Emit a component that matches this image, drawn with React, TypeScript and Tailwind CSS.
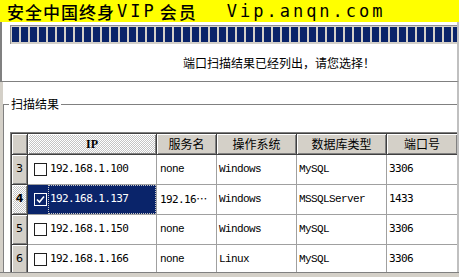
import React from "react";

const rows = [
  { n: "3", ip: "192.168.1.100", svc: "none", os: "Windows", db: "MySQL", port: "3306", sel: false },
  { n: "4", ip: "192.168.1.137", svc: "192.16", os: "Windows", db: "MSSQLServer", port: "1433", sel: true },
  { n: "5", ip: "192.168.1.150", svc: "none", os: "Windows", db: "MySQL", port: "3306", sel: false },
  { n: "6", ip: "192.168.1.166", svc: "none", os: "Linux", db: "MySQL", port: "3306", sel: false },
];

const blocks = Array.from({ length: 50 }, (_, i) => i);

const ipFont = "font-['DejaVu_Sans_Mono',monospace] text-[11px] tracking-[-0.6px]";
const serifMono = "font-['Liberation_Mono',monospace] text-[11px] tracking-[-0.6px]";
const cjk = "font-['Noto_Sans_CJK_SC',sans-serif] text-[12px]";

const headCell =
  "h-[21px] flex items-center justify-center bg-[#d4d0c8] border-r border-b border-[#404040] shadow-[inset_1px_1px_#ffffff,inset_-1px_-1px_#808080] text-black";
const checker =
  "bg-[repeating-conic-gradient(#c4c4c4_0%_25%,#ffffff_0%_50%)] bg-[length:2px_2px]";
const dataCell =
  "h-[30px] flex items-center pl-[2px] bg-white border-r border-b border-[#a0a0a0] overflow-hidden whitespace-nowrap text-black";

function Check({ checked }: { checked: boolean }) {
  if (checked) {
    return (
      <span className="w-[13px] h-[13px] border border-white flex items-center justify-center shrink-0">
        <svg width="9" height="9" viewBox="0 0 9 9">
          <path d="M1 4.5 L3.5 7 L8 1.5" stroke="#ffffff" strokeWidth="1.6" fill="none" />
        </svg>
      </span>
    );
  }
  return <span className="w-[13px] h-[13px] border border-[#202020] bg-white shrink-0" />;
}

export default function App() {
  return (
    <div className="w-[459px] h-[277px] overflow-hidden bg-white flex flex-col">
      <div className="h-[22px] shrink-0 bg-[#ffff00] flex items-center pl-[7px] text-black whitespace-nowrap leading-none">
        <span className="font-['Noto_Sans_CJK_SC',sans-serif] text-[17px] tracking-[1px] font-medium">安全中国终身</span>
        <span className="font-['DejaVu_Sans_Mono',monospace] text-[17px] tracking-[3px] ml-[2px]">VIP</span>
        <span className="font-['Noto_Sans_CJK_SC',sans-serif] text-[17px] tracking-[2px] font-medium ml-[3px]">会员</span>
        <span className="font-['DejaVu_Sans_Mono',monospace] text-[17px] tracking-[3px] ml-[29px]">Vip.anqn.com</span>
      </div>

      <div className="h-[60px] shrink-0 border-l-2 border-l-[#808080] border-r-2 border-r-[#c0c0c0] border-b border-b-[#808080] overflow-hidden">
        <div className="mt-[3px] ml-[8px] h-[19px] bg-[#d4d0c8] border-t border-l border-[#909090] p-[1px] flex gap-[2px] overflow-hidden">
          {blocks.map((i) => (
            <div key={i} className="w-[7px] h-[15px] shrink-0 bg-[#0a246a]" />
          ))}
        </div>
        <div className={`${cjk} leading-[14px] mt-[12px] ml-[181px] text-black whitespace-nowrap`}>
          端口扫描结果已经列出，请您选择！
        </div>
      </div>

      <div className="flex-1 flex min-h-0 overflow-hidden border-r-2 border-r-[#c0c0c0]">
        <div className="w-[3px] shrink-0 bg-[#d4d0c8]" />
        <fieldset className="flex-1 min-w-0 mt-[15px] border-t border-l border-[#808080] pl-[6px] m-0 min-h-0">
          <legend className={`${cjk} leading-[14px] px-[2px] -ml-[1px] text-black`}>扫描结果</legend>
          <div className="mt-[21px] border-t border-l border-[#808080] overflow-hidden h-[400px]">
            <div className="border-t border-l border-[#404040] w-[447px]">
              <div className="grid grid-cols-[16px_129px_60px_80px_90px_71px] w-[446px]">
                <div className={headCell} />
                <div className={`${headCell} ${checker} font-['Liberation_Serif',serif] font-bold text-[12px]`}>IP</div>
                <div className={`${headCell} ${cjk}`}>服务名</div>
                <div className={`${headCell} ${cjk}`}>操作系统</div>
                <div className={`${headCell} ${cjk}`}>数据库类型</div>
                <div className={`${headCell} ${cjk}`}>端口号</div>

                {rows.map((r) => (
                  <React.Fragment key={r.n}>
                    <div
                      className={`h-[30px] flex items-center justify-center border-r border-b border-[#404040] shadow-[inset_1px_1px_#ffffff,inset_-1px_-1px_#808080] ${
                        r.sel ? `${checker} font-bold` : "bg-[#d4d0c8]"
                      } font-['DejaVu_Sans',sans-serif] text-[11px] text-black`}
                    >
                      {r.n}
                    </div>
                    {r.sel ? (
                      <div className="h-[30px] flex items-center pl-[6px] bg-[#0a246a] border-r border-b border-[#a0a0a0] overflow-hidden whitespace-nowrap">
                        <Check checked />
                        <span className={`${ipFont} ml-[1px] h-[29px] flex-1 flex items-center pl-[1px] border border-dotted border-[#c8c8c8] text-white`}>
                          {r.ip}
                        </span>
                      </div>
                    ) : (
                      <div className={`${dataCell} pl-[6px]`}>
                        <Check checked={false} />
                        <span className={`${ipFont} ml-[3px]`}>{r.ip}</span>
                      </div>
                    )}
                    <div className={`${dataCell} pl-[3px]`}>
                      {r.sel ? (
                        <span className={ipFont}>
                          {r.svc}
                          <span className="font-['Noto_Sans_CJK_SC',sans-serif] tracking-normal">…</span>
                        </span>
                      ) : (
                        <span className={serifMono}>{r.svc}</span>
                      )}
                    </div>
                    <div className={dataCell}>
                      <span className={serifMono}>{r.os}</span>
                    </div>
                    <div className={dataCell}>
                      <span className={serifMono}>{r.db}</span>
                    </div>
                    <div className={dataCell}>
                      <span className={ipFont}>{r.port}</span>
                    </div>
                  </React.Fragment>
                ))}
              </div>
            </div>
          </div>
        </fieldset>
      </div>
      <div className="h-[5px] shrink-0 bg-[#d4d0c8] border-t border-[#808080]" />
    </div>
  );
}
